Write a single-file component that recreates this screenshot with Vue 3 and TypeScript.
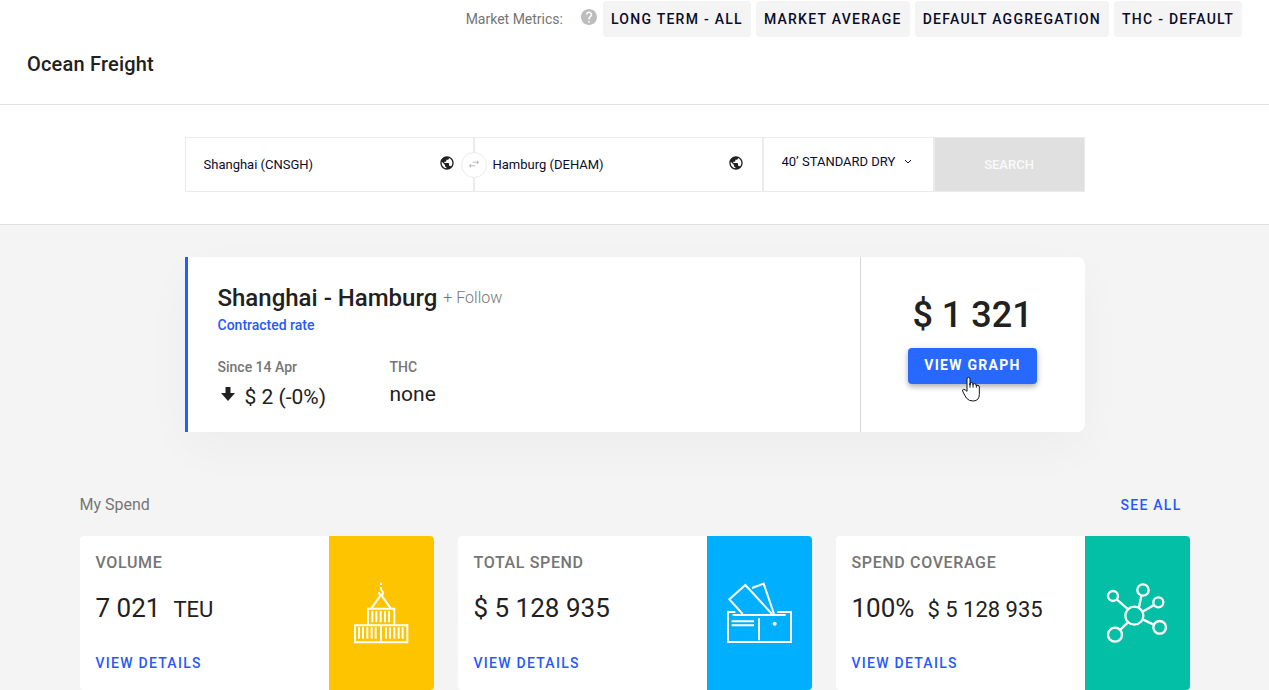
<script setup lang="ts">
import { ref } from 'vue'

interface SpendCard {
  title: string
  value: string
  extra: string
  icon: 'cargo' | 'wallet' | 'network'
}

const metrics: string[] = ['Long term - all', 'Market average', 'Default aggregation', 'THC - default']

const origin = ref('Shanghai (CNSGH)')
const destination = ref('Hamburg (DEHAM)')
const container = ref('40’ STANDARD DRY')

const cards: SpendCard[] = [
  { title: 'Volume', value: '7 021', extra: 'TEU', icon: 'cargo' },
  { title: 'Total spend', value: '$ 5 128 935', extra: '', icon: 'wallet' },
  { title: 'Spend coverage', value: '100%', extra: '$ 5 128 935', icon: 'network' },
]

function swapPorts(): void {
  const previous = origin.value
  origin.value = destination.value
  destination.value = previous
}
</script>

<template>
  <div class="page">
    <header class="header">
      <div class="metrics">
        <span class="metrics-label">Market Metrics:</span>
        <button class="help" type="button" aria-label="Help">
          <svg viewBox="2 2 20 20" aria-hidden="true">
            <path d="M12 2C6.48 2 2 6.48 2 12s4.48 10 10 10 10-4.48 10-10S17.52 2 12 2zm1 17h-2v-2h2v2zm2.07-7.75l-.9.92C13.45 12.9 13 13.5 13 15h-2v-.5c0-1.1.45-2.1 1.17-2.83l1.24-1.26c.37-.36.59-.86.59-1.41 0-1.1-.9-2-2-2s-2 .9-2 2H8c0-2.21 1.79-4 4-4s4 1.79 4 4c0 .88-.36 1.68-.93 2.25z" />
          </svg>
        </button>
        <div class="chips">
          <button v-for="metric in metrics" :key="metric" class="chip" type="button">{{ metric }}</button>
        </div>
      </div>
      <h1 class="page-title">Ocean Freight</h1>
    </header>

    <section class="search-section">
      <form class="search" @submit.prevent>
        <div class="cell port">
          <input v-model="origin" class="port-input" type="text" aria-label="Origin port" />
          <svg class="globe" viewBox="0 0 24 24" aria-hidden="true">
            <path d="M12 2C6.48 2 2 6.48 2 12s4.48 10 10 10 10-4.48 10-10S17.52 2 12 2zm-1 17.93c-3.95-.49-7-3.85-7-7.93 0-.62.08-1.21.21-1.79L9 15v1c0 1.1.9 2 2 2v1.93zm6.9-2.54c-.26-.81-1-1.39-1.9-1.39h-1v-3c0-.55-.45-1-1-1H8v-2h2c.55 0 1-.45 1-1V7h2c1.1 0 2-.9 2-2v-.41c2.93 1.19 5 4.06 5 7.41 0 2.08-.8 3.97-2.1 5.39z" />
          </svg>
          <button class="swap" type="button" aria-label="Swap ports" @click="swapPorts">
            <svg viewBox="0 0 24 24" aria-hidden="true">
              <path d="M6.99 11L3 15l3.99 4v-3H14v-2H6.99v-3zM21 9l-3.99-4v3H10v2h7.01v3L21 9z" />
            </svg>
          </button>
        </div>
        <div class="cell port">
          <input v-model="destination" class="port-input" type="text" aria-label="Destination port" />
          <svg class="globe" viewBox="0 0 24 24" aria-hidden="true">
            <path d="M12 2C6.48 2 2 6.48 2 12s4.48 10 10 10 10-4.48 10-10S17.52 2 12 2zm-1 17.93c-3.95-.49-7-3.85-7-7.93 0-.62.08-1.21.21-1.79L9 15v1c0 1.1.9 2 2 2v1.93zm6.9-2.54c-.26-.81-1-1.39-1.9-1.39h-1v-3c0-.55-.45-1-1-1H8v-2h2c.55 0 1-.45 1-1V7h2c1.1 0 2-.9 2-2v-.41c2.93 1.19 5 4.06 5 7.41 0 2.08-.8 3.97-2.1 5.39z" />
          </svg>
        </div>
        <div class="cell container-type">
          <select v-model="container" class="container-select" aria-label="Container type">
            <option>40’ STANDARD DRY</option>
          </select>
          <svg class="chevron" viewBox="0 0 8 8" aria-hidden="true">
            <path d="M1 2 4 5 7 2" />
          </svg>
        </div>
        <button class="cell search-button" type="submit">SEARCH</button>
      </form>
    </section>

    <main class="main">
      <article class="route">
        <div class="route-info">
          <div class="route-heading">
            <h2 class="route-title">Shanghai - Hamburg</h2>
            <button class="follow" type="button">+ Follow</button>
          </div>
          <p class="contract">Contracted rate</p>
          <dl class="facts">
            <div class="fact">
              <dt>Since 14 Apr</dt>
              <dd class="change">
                <svg class="arrow" viewBox="0 0 14 14" aria-hidden="true">
                  <path d="M4.500 0h5v6H14L7 14 0 6h4.500z" />
                </svg>
                $ 2 (-0%)
              </dd>
            </div>
            <div class="fact">
              <dt>THC</dt>
              <dd>none</dd>
            </div>
          </dl>
        </div>
        <div class="route-price">
          <p class="price">$ 1 321</p>
          <div class="graph-action">
            <button class="view-graph" type="button">View graph</button>
            <svg class="pointer" viewBox="367 393 60 78" aria-hidden="true">
              <path d="M385 438V402q0-5 4.500-5t4.500 5v18-3q0-4 4.500-4t4.500 4v2q1-4 5-3t5 5v2q1-3 5-2t4 5v22q0 19-18 20-13 1-21-9L373 441q-4-8 2-8 4 0 10 6z" />
              <path d="M394 415v13M403 417v11M413 419v9" />
            </svg>
          </div>
        </div>
      </article>

      <section class="spend">
        <div class="spend-header">
          <h2 class="spend-title">My Spend</h2>
          <a class="link see-all" href="#">See all</a>
        </div>
        <div class="cards">
          <article v-for="card in cards" :key="card.title" class="card">
            <div class="card-body">
              <h3 class="card-title">{{ card.title }}</h3>
              <p class="card-value">
                <span>{{ card.value }}</span>
                <span v-if="card.extra" class="card-extra">{{ card.extra }}</span>
              </p>
              <a class="link" href="#">View details</a>
            </div>
            <div class="card-art" :class="card.icon">
              <svg v-if="card.icon === 'cargo'" class="art" viewBox="84 156 204 186" aria-hidden="true">
                <path d="M186 158v7M186 171v9M180 187q0 8 6 8t6-7q0-5-6-7" />
                <path d="M186 194 157 235M186 194 215 235" />
                <path d="M147 284V236h79v48M108 286h157v51H108zM186 286v51" />
                <path d="M160 243v34M172 243v34M185 243v34M198 243v34M210 243v34" />
                <path d="M120 292v34M132 292v34M145 292v34M158 292v34M170 292v34M201 292v34M213 292v34M226 292v34M239 292v34M251 292v34" />
              </svg>
              <svg v-else-if="card.icon === 'wallet'" class="art" viewBox="78 156 204 186" aria-hidden="true">
                <path d="M109 246H87v90h189v-90h-41M101 255h159" />
                <path d="M131 252 91 208 139 165 219 252M159 174l35-13 31 91" />
                <path d="M98 274h67M98 286h67M180 265v66" />
                <circle class="dot" cx="227" cy="281" r="6" />
              </svg>
              <svg v-else class="art network-art" viewBox="72 156 204 186" aria-hidden="true">
                <circle cx="166" cy="257" r="27" />
                <circle cx="102" cy="198" r="15" />
                <circle cx="192" cy="180" r="17" />
                <circle cx="238" cy="217" r="15" />
                <circle cx="242" cy="292" r="19" />
                <circle cx="108" cy="314" r="21" />
                <path d="M113 208 145 236M187 197 180 232M225 225 191 245M224 284 191 268M124 299 147 277" />
              </svg>
            </div>
          </article>
        </div>
      </section>
    </main>
  </div>
</template>

<style>
body {
  margin: 0;
}
</style>

<style scoped>
.page {
  min-height: 100vh;
  background: #f4f4f4;
  color: #212121;
  font-family: Roboto, "Liberation Sans", sans-serif;
}

.page * {
  box-sizing: border-box;
}

h1, h2, h3, p, dl, dd {
  margin: 0;
}

button, input, select {
  margin: 0;
  padding: 0;
  border: 0;
  background: none;
  color: inherit;
  font-family: inherit;
}

svg {
  display: block;
}

.header {
  padding: 1px 27px 26px;
  background: #fff;
  border-bottom: 1px solid #e0e0e0;
}

.metrics {
  display: flex;
  align-items: center;
  justify-content: flex-end;
}

.metrics-label {
  margin-right: 18px;
  color: #757575;
  font-size: 14px;
  line-height: 20px;
}

.help {
  width: 16px;
  height: 16px;
  margin: 0 6px 4px 0;
  fill: #bdbdbd;
}

.chips {
  display: flex;
  gap: 5px;
}

.chip {
  height: 36px;
  padding: 0 8px;
  border-radius: 4px;
  background: #f4f4f4;
  color: #0b0b2b;
  font-size: 14px;
  font-weight: 500;
  letter-spacing: 0.09em;
  text-transform: uppercase;
}

.page-title {
  margin-top: 13px;
  font-size: 20px;
  font-weight: 500;
  line-height: 28px;
  letter-spacing: 0.01em;
}

.search-section {
  padding: 32px 16px;
  background: #fff;
  border-bottom: 1px solid #e0e0e0;
}

.search {
  display: flex;
  max-width: 900px;
  margin: 0 auto;
}

.cell {
  position: relative;
  display: flex;
  align-items: center;
  height: 55px;
  border: 1px solid #ebebeb;
}

.port {
  flex: 1;
  padding: 0 18px;
}

.port-input {
  flex: 1;
  min-width: 0;
  color: #0b0b2b;
  font-size: 13px;
  line-height: 20px;
}

.globe {
  width: 16px;
  height: 16px;
  margin-bottom: 3px;
  fill: #212121;
}

.swap {
  position: absolute;
  z-index: 1;
  top: 50%;
  right: -14px;
  display: flex;
  align-items: center;
  justify-content: center;
  width: 26px;
  height: 26px;
  margin-top: -13px;
  padding-bottom: 2px;
  border: 1px solid #ebebeb;
  border-radius: 50%;
  background: #fff;
}

.swap svg {
  width: 14px;
  height: 14px;
  fill: #bdbdbd;
}

.container-type {
  width: 171px;
  padding: 0 21px 6px 18px;
}

.container-select {
  appearance: none;
  flex: 1;
  min-width: 0;
  color: #0b0b2b;
  font-size: 13px;
  line-height: 20px;
}

.chevron {
  width: 8px;
  height: 8px;
  fill: none;
  stroke: #0b0b2b;
}

.search-button {
  justify-content: center;
  width: 151px;
  background: #e0e0e0;
  color: #fafafa;
  font-size: 13px;
  font-weight: 500;
}

.main {
  padding: 32px 16px 0;
}

.route {
  display: flex;
  max-width: 900px;
  margin: 0 auto;
  border-left: 3px solid #1f5eff;
  border-radius: 0 8px 8px 0;
  background: #fff;
  box-shadow: 0 16px 48px rgba(0, 0, 0, 0.03);
}

.route-info {
  flex: 1;
  padding: 25px 30px 15px;
}

.route-heading {
  display: flex;
  align-items: center;
  gap: 6px;
}

.route-title {
  font-size: 24px;
  font-weight: 500;
  line-height: 32px;
}

.follow {
  padding-bottom: 2px;
  color: #757575;
  font-size: 16px;
  font-weight: 300;
}

.contract {
  margin-top: 1px;
  color: #2758ff;
  font-size: 14px;
  font-weight: 500;
  line-height: 20px;
}

.facts {
  display: flex;
  margin-top: 22px;
}

.fact {
  width: 172px;
}

.fact dt {
  color: #757575;
  font-size: 14px;
  font-weight: 500;
  line-height: 20px;
}

.fact dd {
  font-size: 21px;
  line-height: 34px;
}

.fact .change {
  display: flex;
  align-items: center;
  gap: 10px;
  padding-left: 3px;
  line-height: 40px;
}

.arrow {
  width: 14px;
  height: 14px;
  margin-bottom: 6px;
  fill: #212121;
}

.route-price {
  display: flex;
  flex-direction: column;
  align-items: center;
  width: 225px;
  padding-top: 34px;
  border-left: 1px solid #d6d6d6;
}

.price {
  font-size: 36px;
  font-weight: 500;
  line-height: 48px;
}

.graph-action {
  position: relative;
  margin-top: 9px;
}

.view-graph {
  height: 36px;
  padding: 0 16px 2px;
  border-radius: 4px;
  background: #2769ff;
  box-shadow: 0 3px 5px rgba(0, 0, 0, 0.24), 0 1px 10px rgba(0, 0, 0, 0.1);
  color: #fff;
  font-size: 14px;
  font-weight: 700;
  letter-spacing: 0.09em;
  text-transform: uppercase;
}

.pointer {
  position: absolute;
  top: 28px;
  left: 53px;
  width: 20px;
  height: 26px;
  fill: #fff;
  stroke: #10131f;
  stroke-width: 3;
  stroke-linejoin: round;
  pointer-events: none;
}

.spend {
  max-width: 1110px;
  margin: 61px auto 0;
}

.spend-header {
  display: flex;
  align-items: center;
  justify-content: space-between;
  padding-right: 8px;
}

.spend-title {
  color: #757575;
  font-size: 16px;
  font-weight: 400;
  line-height: 24px;
}

.link {
  color: #2758ff;
  font-size: 14px;
  font-weight: 500;
  line-height: 20px;
  letter-spacing: 0.09em;
  text-decoration: none;
  text-transform: uppercase;
}

.cards {
  display: grid;
  grid-template-columns: repeat(3, 1fr);
  gap: 24px;
  margin-top: 19px;
}

.card {
  display: flex;
  overflow: hidden;
  border-radius: 4px;
  background: #fff;
}

.card-body {
  flex: 1;
  padding: 15px 16px 13px;
}

.card-title {
  color: #757575;
  font-size: 16px;
  font-weight: 500;
  line-height: 24px;
  letter-spacing: 0.04em;
  text-transform: uppercase;
}

.card-value {
  display: flex;
  align-items: baseline;
  gap: 13px;
  height: 32px;
  margin: 17px 0 26px;
  font-size: 26px;
  line-height: 32px;
}

.card-extra {
  font-size: 22px;
}

.card-body .link {
  display: block;
  padding: 3px 0 4px;
}

.card-art {
  display: flex;
  align-items: center;
  justify-content: center;
  width: 105px;
}

.cargo {
  background: #ffc400;
}

.wallet {
  background: #00b0ff;
}

.network {
  background: #03bfa5;
}

.art {
  width: 68px;
  height: 62px;
  fill: none;
  stroke: #fff;
  stroke-width: 6;
}

.network-art {
  stroke-width: 7;
}

.art .dot {
  fill: #fff;
  stroke: none;
}
</style>
